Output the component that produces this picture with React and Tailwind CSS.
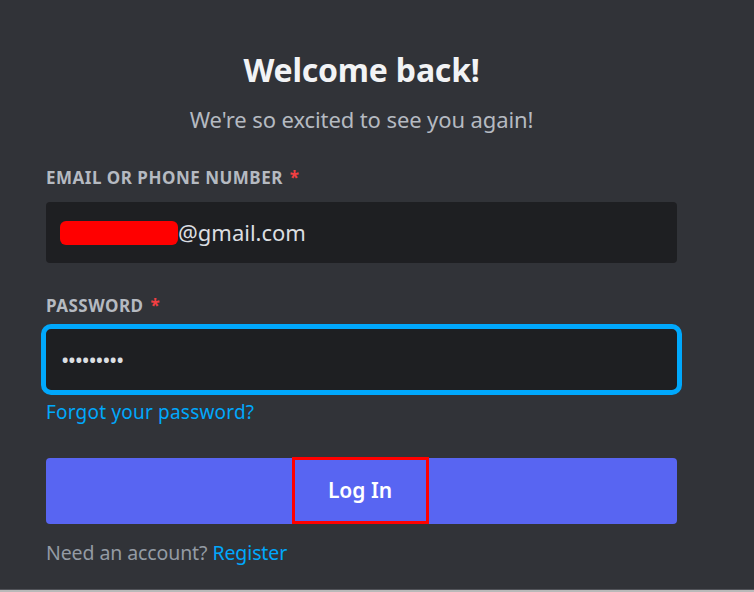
import React, { useState } from "react";

const App = () => {
  const [email, setEmail] = useState("@gmail.com");
  const [password, setPassword] = useState("xxxxxxxxx");

  return (
    <div
      className="w-[754px] h-[592px] bg-[#313338] flex flex-col overflow-hidden"
      style={{ fontFamily: '"Noto Sans", "Open Sans", sans-serif' }}
    >
      <div className="flex-1 flex flex-col px-[46px] pr-[77px]">
        {/* Header */}
        <h1 className="mt-[46px] text-center text-[32px] leading-[48px] font-bold text-[#f2f3f5] tracking-[-0.2px]">
          Welcome back!
        </h1>
        <p className="mt-[11px] text-center text-[22px] leading-[28px] text-[#b5bac1] tracking-[-0.1px]">
          We're so excited to see you again!
        </p>

        {/* Email */}
        <label className="mt-[35px] text-[17px] leading-[20px] font-bold text-[#b5bac1] tracking-[0.5px]">
          EMAIL OR PHONE NUMBER <span className="text-[#f23f42] ml-[2px]">*</span>
        </label>
        <div className="mt-[14px] h-[61px] bg-[#1e1f22] rounded-[4px] flex items-center px-[14px]">
          <span className="w-[118px] h-[24px] bg-[#ff0000] rounded-[6px] shrink-0" />
          <input
            className="flex-1 bg-transparent outline-none text-[22px] text-[#dbdee1]"
            value={email}
            onChange={(e) => setEmail(e.target.value)}
          />
        </div>

        {/* Password */}
        <label className="mt-[33px] text-[17px] leading-[20px] font-bold text-[#b5bac1] tracking-[0.5px]">
          PASSWORD <span className="text-[#f23f42] ml-[2px]">*</span>
        </label>
        <div className="mt-[8px] mx-[-5px] h-[71px] border-[5px] border-[#00a8fc] rounded-[10px] bg-[#1e1f22] flex items-center px-[15px]">
          <input
            type="password"
            className="flex-1 bg-transparent outline-none text-[22px] text-[#dbdee1] tracking-[-1.4px]"
            value={password}
            onChange={(e) => setPassword(e.target.value)}
          />
        </div>
        <a href="#" className="mt-[4px] self-start text-[19px] leading-[26px] text-[#00a8fc] tracking-[0.2px]">
          Forgot your password?
        </a>

        {/* Submit */}
        <button className="mt-[33px] h-[66px] bg-[#5865f2] rounded-[4px] flex justify-center">
          <span className="w-[137px] h-[67px] -mt-[1px] -ml-[3px] border-[3px] border-[#ff0000] flex items-center justify-center text-[21px] font-semibold text-white">
            Log In
          </span>
        </button>

        <p className="mt-[16px] text-[19.5px] leading-[26px] text-[#949ba4] tracking-[-0.1px]">
          Need an account? <a href="#" className="text-[#00a8fc]">Register</a>
        </p>
      </div>
      <div className="h-[1px] bg-[#505258]" />
      <div className="h-[2px] bg-[#b9b9b9]" />
    </div>
  );
};

export default App;
